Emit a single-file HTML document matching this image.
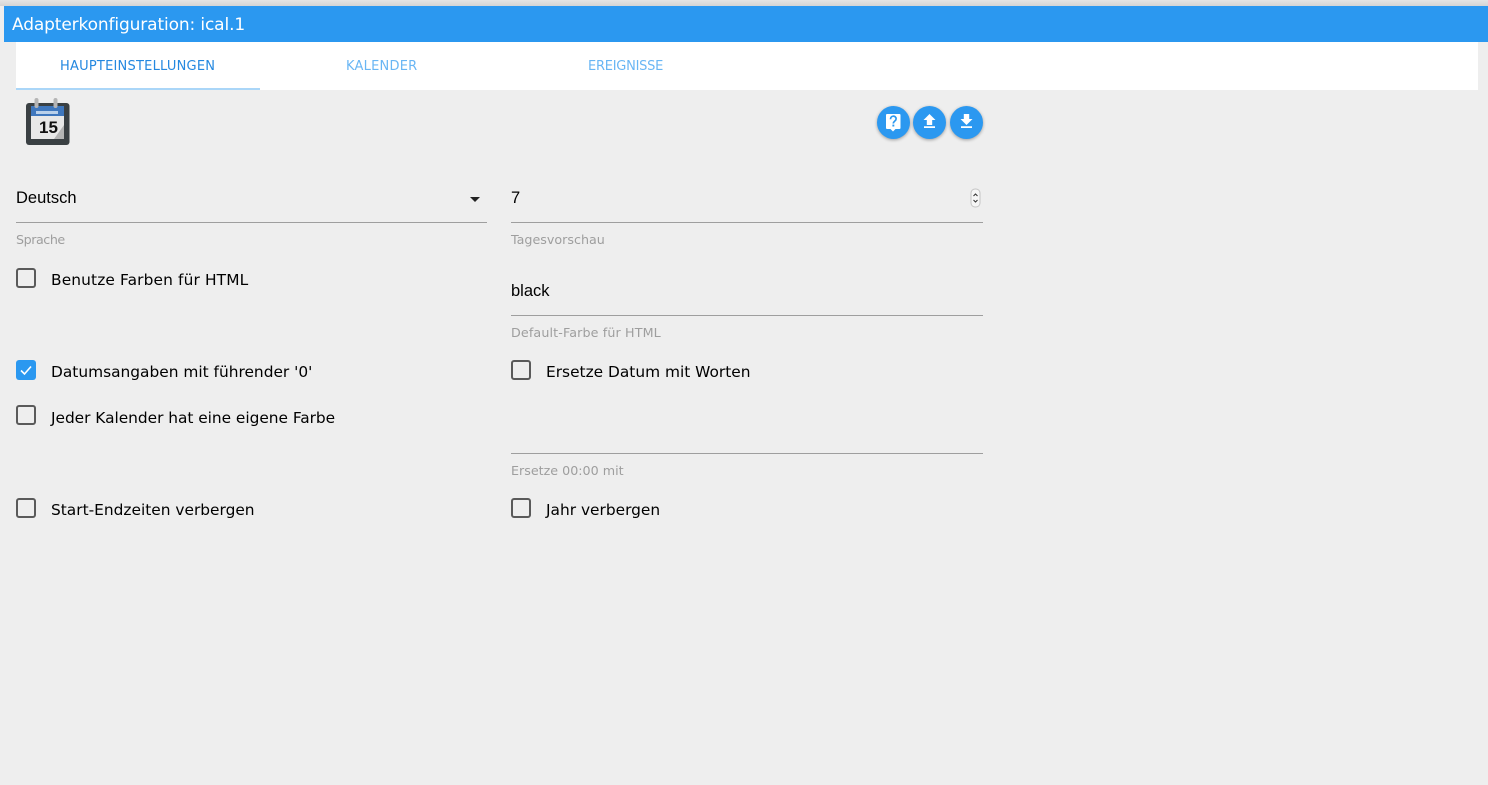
<!DOCTYPE html>
<html lang="de">
<head>
<meta charset="utf-8">
<title>Adapterkonfiguration: ical.1</title>
<style>
html,body{margin:0;padding:0;width:1488px;height:785px;overflow:hidden;background:#eeeeee}
body{position:relative;font-family:"DejaVu Sans",sans-serif;color:#000}
.a{position:absolute;white-space:nowrap}
.top{left:0;top:0;width:1488px;height:6px;background:linear-gradient(#e4e4e4,#d4d4d4)}
.bar{left:4px;top:6px;width:1484px;height:36px;background:#2b98f0}
.title{left:12px;top:6px;line-height:38px;font-size:17px;color:#fff;letter-spacing:-.13px}
.tabs{left:16px;top:42px;width:1462px;height:48px;background:#fff}
.ind{left:16px;top:88px;width:244px;height:2px;background:#aad6f8}
.tab{top:42px;line-height:49px;font-family:"DejaVu Sans",sans-serif;font-size:13px;color:#2b98f0;opacity:.7}
.tab.on{opacity:1;color:#2488e0}
.fab{width:33px;height:33px;border-radius:50%;background:#2b98f0;box-shadow:0 1px 3px rgba(0,0,0,.35);top:106px}
.fab svg{position:absolute;left:0;top:0}
.val{font-family:"Liberation Sans",sans-serif;font-size:16.5px;line-height:20px}
.line{height:1px;background:#9e9e9e}
.lab{font-size:12.7px;line-height:14px;color:#9e9e9e}
.cb{width:16px;height:16px;border:2px solid #5a5a5a;border-radius:3px;background:transparent}
.cb.on{width:20px;height:20px;border:0;background:#2b98f0}
.txt{font-size:15.4px;line-height:20px;color:#000}
</style>
</head>
<body>
<div class="a top"></div>
<div class="a bar"></div>
<div class="a title">Adapterkonfiguration: ical.1</div>
<div class="a tabs"></div>
<div class="a ind"></div>
<div class="a tab on" style="left:60px;letter-spacing:.22px">HAUPTEINSTELLUNGEN</div>
<div class="a tab" style="left:346px;letter-spacing:.22px">KALENDER</div>
<div class="a tab" style="left:588px;letter-spacing:-.25px">EREIGNISSE</div>

<svg class="a" style="left:24px;top:97px" width="48" height="52" viewBox="0 0 48 52">
<rect x="2" y="6" width="43.500" height="42" rx="3" fill="#3a4043"/>
<rect x="7" y="9" width="33" height="33" fill="#e8e8e8"/>
<rect x="7" y="9" width="33" height="10" fill="#3f77bd"/>
<rect x="12" y="14" width="22" height="3" fill="#b9d0ea"/>
<rect x="10.500" y="1" width="4" height="10" rx="2" fill="#b5b5b5"/>
<rect x="29.500" y="1" width="4" height="10" rx="2" fill="#b5b5b5"/>
<text x="15" y="36" font-family="Liberation Sans,sans-serif" font-size="17" font-weight="700" fill="#111">15</text>
<path d="M40 28V42H30Z" fill="#b4b4b4"/>
</svg>

<div class="a fab" style="left:877px">
<svg width="33" height="33" viewBox="0 0 33 33"><path d="M10 8h12.500a1 1 0 0 1 1 1v13a1 1 0 0 1-1 1h-4l-2.500 2.500L13.500 23H10a1 1 0 0 1-1-1V9a1 1 0 0 1 1-1z" fill="#fff"/><path d="M13.500 13.200c0-4 5.600-4 5.600-.3 0 2.300-2.800 2.200-2.800 4.600" fill="none" stroke="#2b98f0" stroke-width="1.700"/><rect x="15.400" y="18.600" width="1.900" height="1.900" fill="#2b98f0"/></svg>
</div>
<div class="a fab" style="left:913px">
<svg width="33" height="33" viewBox="0 0 33 33"><path d="M16.500 8l6 6h-3.300v5h-5.400v-5h-3.300zM11 20.300h11v1.700H11z" fill="#fff"/></svg>
</div>
<div class="a fab" style="left:950px">
<svg width="33" height="33" viewBox="0 0 33 33"><path d="M13.800 8h5.400v5h3.300l-6 6-6-6h3.300zM11 20.300h11v1.700H11z" fill="#fff"/></svg>
</div>

<div class="a val" style="left:16px;top:188px">Deutsch</div>
<svg class="a" style="left:470px;top:197px" width="11" height="6" viewBox="0 0 11 6"><path d="M0 0h10l-5 5z" fill="#222"/></svg>
<div class="a line" style="left:16px;top:222px;width:471px"></div>
<div class="a lab" style="left:16px;top:233px;letter-spacing:-.45px">Sprache</div>

<div class="a val" style="left:511px;top:188px">7</div>
<svg class="a" style="left:970px;top:188px" width="11" height="20" viewBox="0 0 11 20"><rect x="1" y="1" width="9" height="18" rx="4" fill="#f6f6f6" stroke="#c4c4c4"/><path d="M3.500 8L5.500 6l2 2M3.500 12l2 2 2-2" fill="none" stroke="#333" stroke-width="1"/></svg>
<div class="a line" style="left:511px;top:222px;width:472px"></div>
<div class="a lab" style="left:511px;top:233px">Tagesvorschau</div>

<div class="a cb" style="left:16px;top:268px"></div>
<div class="a txt" style="left:51px;top:270px;letter-spacing:.13px">Benutze Farben für HTML</div>

<div class="a val" style="left:511px;top:281px">black</div>
<div class="a line" style="left:511px;top:315px;width:472px"></div>
<div class="a lab" style="left:511px;top:326px;letter-spacing:.13px">Default-Farbe für HTML</div>

<div class="a cb on" style="left:16px;top:360px"><svg width="20" height="20" viewBox="0 0 20 20"><path d="M5 10.500l3.500 3.500 6.500-7.500" fill="none" stroke="#fff" stroke-width="1.600"/></svg></div>
<div class="a txt" style="left:51px;top:362px">Datumsangaben mit führender '0'</div>

<div class="a cb" style="left:511px;top:360px"></div>
<div class="a txt" style="left:546px;top:362px">Ersetze Datum mit Worten</div>

<div class="a cb" style="left:16px;top:405px"></div>
<div class="a txt" style="left:51px;top:408px;letter-spacing:-.03px">Jeder Kalender hat eine eigene Farbe</div>

<div class="a line" style="left:511px;top:453px;width:472px"></div>
<div class="a lab" style="left:511px;top:464px">Ersetze 00:00 mit</div>

<div class="a cb" style="left:16px;top:498px"></div>
<div class="a txt" style="left:51px;top:500px">Start-Endzeiten verbergen</div>

<div class="a cb" style="left:511px;top:498px"></div>
<div class="a txt" style="left:546px;top:500px">Jahr verbergen</div>
</body>
</html>
